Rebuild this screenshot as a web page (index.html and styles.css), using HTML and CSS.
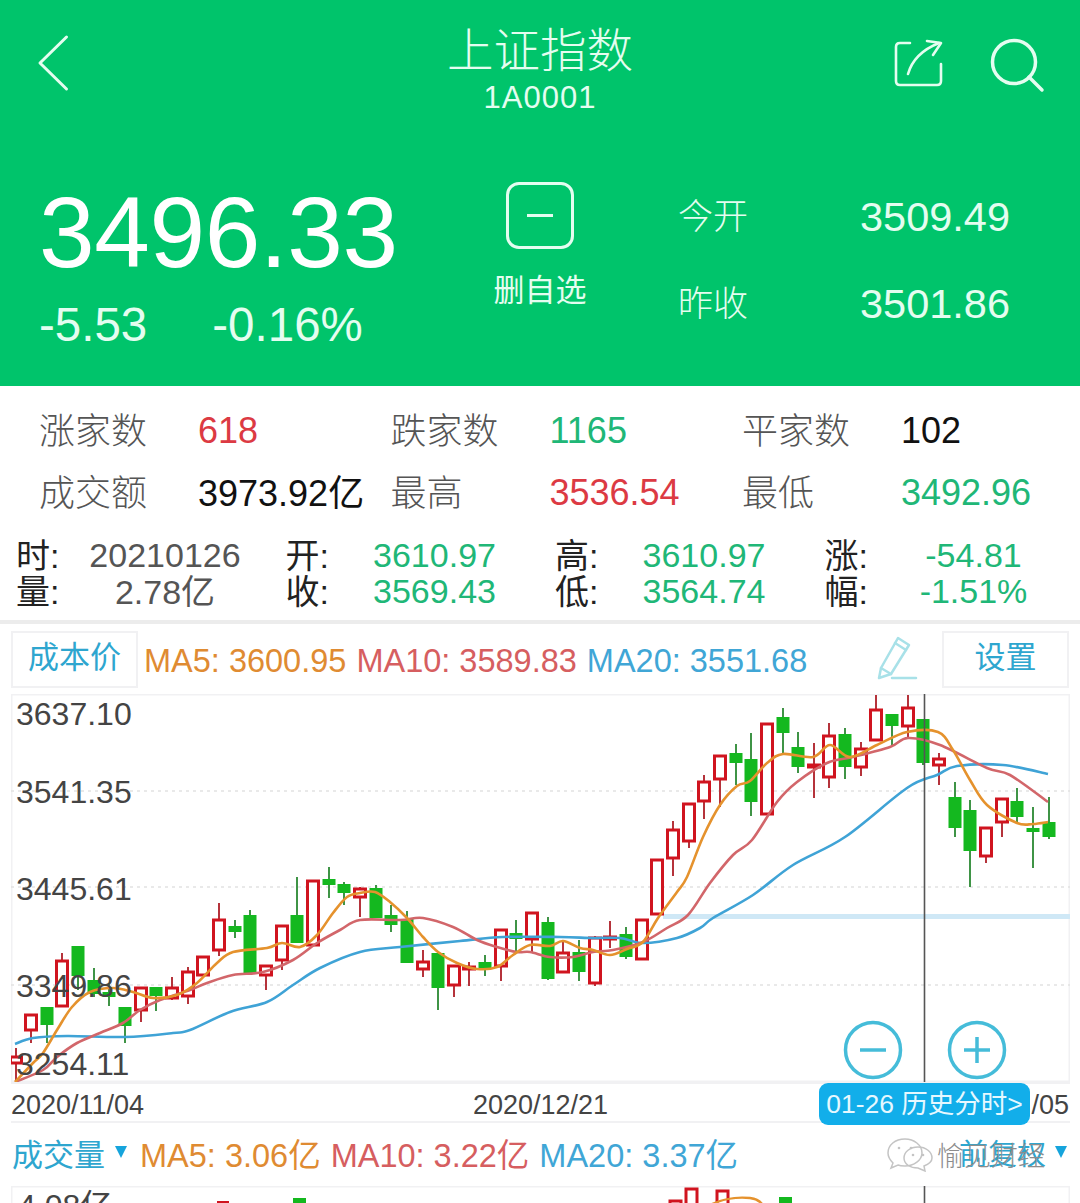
FILE: index.html
```html
<!DOCTYPE html>
<html lang="zh-CN">
<head>
    <meta charset="UTF-8">
    <meta name="viewport" content="width=device-width, initial-scale=1.0">
    <title>上证指数</title>
    <link rel="stylesheet" href="styles.css">
</head>
<body>
    <header class="hero">
        <div class="topbar">
            <svg class="icon-back" width="40" height="64" viewBox="30 32 40 64">
                <path d="M66.5 38 L40 64 L66.5 90"/>
            </svg>
            <div class="title">
                <h1>上证指数</h1>
                <p>1A0001</p>
            </div>
            <div class="topbar-actions">
                <svg class="icon-share" width="50" height="54" viewBox="894 38 50 54">
                    <path d="M910 45 H900 Q896 45 896 49 V83 Q896 87 900 87 H937 Q941 87 941 83 V66"/>
                    <path d="M908 76 Q914 55 939 45"/>
                    <path d="M927 43 L941 45 L933 57"/>
                </svg>
                <svg width="56" height="58" viewBox="990 36 56 58">
                    <circle cx="1014" cy="62" r="21.5"/>
                    <path d="M1029 77 L1042 90"/>
                </svg>
            </div>
        </div>
        <div class="quote">
            <div class="price">
                <div class="price-now">3496.33</div>
                <div class="price-change"><span>-5.53</span><span>-0.16%</span></div>
            </div>
            <div class="watch">
                <div class="watch-box"><i></i></div>
                <span>删自选</span>
            </div>
            <dl class="open-close">
                <dt>今开</dt><dd>3509.49</dd>
                <dt>昨收</dt><dd>3501.86</dd>
            </dl>
        </div>
    </header>

    <section class="market">
        <div class="market-cell"><span class="market-label">涨家数</span><span class="red">618</span></div>
        <div class="market-cell"><span class="market-label">跌家数</span><span class="green">1165</span></div>
        <div class="market-cell"><span class="market-label">平家数</span><span class="black">102</span></div>
        <div class="market-cell"><span class="market-label">成交额</span><span class="black has-unit">3973.92亿</span></div>
        <div class="market-cell"><span class="market-label">最高</span><span class="red">3536.54</span></div>
        <div class="market-cell"><span class="market-label">最低</span><span class="green">3492.96</span></div>
    </section>

    <section class="ohlc">
        <div class="ohlc-cell"><span class="ohlc-label">时:</span><span class="ohlc-value gray">20210126</span></div>
        <div class="ohlc-cell"><span class="ohlc-label">开:</span><span class="ohlc-value green">3610.97</span></div>
        <div class="ohlc-cell"><span class="ohlc-label">高:</span><span class="ohlc-value green">3610.97</span></div>
        <div class="ohlc-cell"><span class="ohlc-label">涨:</span><span class="ohlc-value green">-54.81</span></div>
        <div class="ohlc-cell"><span class="ohlc-label">量:</span><span class="ohlc-value gray has-unit">2.78亿</span></div>
        <div class="ohlc-cell"><span class="ohlc-label">收:</span><span class="ohlc-value green">3569.43</span></div>
        <div class="ohlc-cell"><span class="ohlc-label">低:</span><span class="ohlc-value green">3564.74</span></div>
        <div class="ohlc-cell"><span class="ohlc-label">幅:</span><span class="ohlc-value green">-1.51%</span></div>
    </section>

    <section class="kline">
        <div class="legend">
            <div class="tab-box">成本价</div>
            <div class="ma-list">
                <span class="ma5">MA5: 3600.95</span>
                <span class="ma10">MA10: 3589.83</span>
                <span class="ma20">MA20: 3551.68</span>
            </div>
            <svg class="icon-pen" width="42" height="48" viewBox="878 634 42 48">
                <path d="M881 677 L883 667 L900 637 L911 644 L893 673 Z"/>
                <path d="M897 642 L908 649"/>
                <path d="M883 667 L893 673"/>
                <path d="M894 677 H918"/>
            </svg>
            <div class="tab-box tab-set">设置</div>
        </div>

        <div class="chart-frame">
            <svg id="kchart" class="chart" width="1059" height="388" viewBox="11 694 1059 388"></svg>
            <button class="zoom-btn zoom-out"><svg width="60" height="60" viewBox="0 0 60 60"><circle cx="30" cy="30" r="27.5"/><path d="M17 30 H43"/></svg></button>
            <button class="zoom-btn zoom-in"><svg width="60" height="60" viewBox="0 0 60 60"><circle cx="30" cy="30" r="27.5"/><path d="M17 30 H43 M30 17 V43"/></svg></button>
        </div>

        <div class="dates">
            <span>2020/11/04</span>
            <span>2020/12/21</span>
            <span class="date-end">/05</span>
            <div class="history-tip">01-26 历史分时&gt;</div>
        </div>

        <div class="volume-bar">
            <span class="volume-name">成交量</span><i class="tri"></i>
            <div class="ma-list">
                <span class="ma5">MA5: 3.06亿</span>
                <span class="ma10">MA10: 3.22亿</span>
                <span class="ma20">MA20: 3.37亿</span>
            </div>
            <span class="volume-right">前复权</span><i class="tri"></i>
            <div class="watermark">
                <svg width="46" height="34" viewBox="887 1139 46 34">
                    <path d="M905 1140 C895 1140 888 1146 888 1154 C888 1158 890 1161 893 1164 L891 1169 L898 1166 C900 1167 902 1167 905 1167 C914 1167 922 1161 922 1154 C922 1146 914 1140 905 1140 Z"/>
                    <circle cx="899" cy="1149" r="1.3"/>
                    <circle cx="911" cy="1149" r="1.3"/>
                    <path d="M918 1148 C910 1148 904 1153 904 1159 C904 1165 910 1169 918 1169 L925 1172 L924 1167 C929 1165 932 1162 932 1159 C932 1153 926 1148 918 1148 Z"/>
                    <circle cx="913" cy="1156" r="1.3"/>
                    <circle cx="923" cy="1156" r="1.3"/>
                </svg>
                <span>愉见财经</span>
            </div>
        </div>

        <div class="chart-frame volume-frame">
            <svg id="vchart" class="chart" width="1059" height="40" viewBox="11 1186 1059 40"></svg>
        </div>
    </section>

    <script src="chart.js"></script>
</body>
</html>
```

FILE: styles.css
```css
* {
    box-sizing: border-box;
}

html, body {
    margin: 0;
    padding: 0;
    height: 1203px;
    overflow: hidden;
}

body {
    width: 1080px;
    background: #ffffff;
    font-family: "Liberation Sans", "Noto Sans CJK SC", sans-serif;
    color: #444;
}

/* green header */
.hero {
    height: 386px;
    background-color: #00c46b;
    color: #e4fdf0;
    padding: 0 36px 0 36px;
}

.hero svg {
    display: block;
}

.hero svg path, .hero svg circle {
    fill: none;
    stroke: #e4fdf0;
    stroke-width: 3.5;
    stroke-linecap: round;
    stroke-linejoin: round;
}

.hero .icon-share path {
    stroke-width: 2.6;
}

.hero .icon-back path {
    stroke-width: 3;
}

.topbar {
    height: 182px;
    display: flex;
    justify-content: space-between;
    align-items: flex-start;
    position: relative;
}

.icon-back {
    margin-top: 31px;
    margin-left: -6px;
}

.title {
    position: absolute;
    left: 0;
    right: 0;
    top: 23px;
    text-align: center;
    pointer-events: none;
}

.title h1 {
    margin: 0;
    font-size: 46.5px;
    line-height: 56px;
    font-weight: 300;
}

.title p {
    margin: 0;
    font-size: 31px;
    line-height: 38px;
    letter-spacing: 1px;
}

.topbar-actions {
    display: flex;
    gap: 46px;
    margin-top: 36px;
    margin-right: -2px;
}

.quote {
    display: flex;
    align-items: flex-start;
}

.price {
    width: 449px;
    padding-left: 3px;
}

.price-now {
    color: #ffffff;
    font-size: 100px;
    line-height: 100px;
    letter-spacing: -0.4px;
}

.price-change {
    display: flex;
    gap: 65px;
    margin-top: 16px;
    font-size: 47.5px;
    line-height: 54px;
}

.watch {
    width: 110px;
    display: flex;
    flex-direction: column;
    align-items: center;
}

.watch-box {
    width: 68px;
    height: 67px;
    border: 3.5px solid #e4fdf0;
    border-radius: 13px;
    display: flex;
    align-items: center;
    justify-content: center;
}

.watch-box i {
    width: 26px;
    height: 3.5px;
    background: #e4fdf0;
}

.watch span {
    margin-top: 22px;
    font-size: 31px;
    line-height: 40px;
    white-space: nowrap;
}

.open-close {
    margin: 7px 0 0 83px;
    display: grid;
    grid-template-columns: 182px auto;
    row-gap: 31px;
    font-size: 35px;
    line-height: 56px;
}

.open-close dt {
    font-weight: 300;
}

.open-close dd {
    margin: 0;
    font-size: 41.5px;
}

/* market breadth */
.market {
    display: grid;
    grid-template-columns: repeat(3, 351.5px);
    grid-auto-rows: 62px;
    padding: 14px 0 0 40px;
    font-size: 36px;
}

.market-cell {
    display: flex;
    align-items: center;
    white-space: nowrap;
}

.market-label {
    width: 158px;
    flex: none;
    color: #555;
    font-weight: 300;
    padding-bottom: 6px;
    margin-left: -1px;
    margin-right: 1px;
}

/* the CJK unit makes the line box taller, pull it back up */
.market-cell .has-unit {
    padding-bottom: 7px;
}

.ohlc-value.has-unit {
    padding-bottom: 4px;
}

.red { color: #dc3a43; }
.green { color: #20b777; }
.black { color: #111; }
.gray { color: #555; }

/* ohlc of selected day */
.ohlc {
    display: grid;
    grid-template-columns: repeat(4, 269.5px);
    grid-auto-rows: 36px;
    margin-top: 13px;
    padding-left: 16px;
    height: 87px;
    border-bottom: 4px solid #ececec;
    font-size: 34px;
}

.ohlc-cell {
    display: flex;
    align-items: center;
}

.ohlc-label {
    width: 60px;
    color: #222;
    padding-bottom: 3px;
}

.ohlc-value {
    width: 178px;
    text-align: center;
    white-space: nowrap;
}

/* k line */
.kline {
    padding: 5px 10px 0 11px;
}

.legend {
    height: 60px;
    display: flex;
    align-items: center;
}

.tab-box {
    width: 127px;
    height: 57px;
    border: 2px solid #f1f1f3;
    color: #2ea6cf;
    font-size: 31px;
    text-align: center;
    line-height: 50px;
    flex: none;
}

.ma-list {
    display: flex;
    gap: 10px;
    white-space: nowrap;
    font-size: 32.5px;
}

.legend .ma-list {
    margin-left: 6px;
    margin-top: 5px;
    width: 664px;
    flex: none;
}

.ma5 { color: #df8b32; }
.ma10 { color: #d65e60; }
.ma20 { color: #40a6d6; }

.icon-pen {
    flex: none;
    margin-left: 68px;
}

.icon-pen path {
    fill: none;
    stroke: #a8e1e8;
    stroke-width: 2.5;
    stroke-linejoin: round;
    stroke-linecap: round;
}

.tab-set {
    margin-left: 24px;
}

.chart-frame {
    position: relative;
    height: 388px;
    margin-top: 5px;
    box-shadow: inset 0 0 0 1.5px #f1f1f3;
}

.chart {
    display: block;
    overflow: hidden;
}

.chart text {
    font-family: "Liberation Sans", "Noto Sans CJK SC", sans-serif;
    font-size: 32px;
    fill: #444;
}

.zoom-btn {
    position: absolute;
    top: 326px;
    width: 60px;
    height: 60px;
    padding: 0;
    border: none;
    background: none;
}

.zoom-btn svg {
    display: block;
}

.zoom-btn circle, .zoom-btn path {
    fill: none;
    stroke: #45bcd9;
    stroke-width: 3.5;
}

.zoom-out { left: 832px; }
.zoom-in { left: 936px; }

.dates {
    position: relative;
    height: 41px;
    display: grid;
    grid-template-columns: 1fr auto 1fr;
    align-items: center;
    padding-top: 5px;
    font-size: 27px;
    color: #444;
    border-top: 2px solid #f1f1f3;
    border-bottom: 2px solid #f1f1f3;
}

.date-end {
    justify-self: end;
    padding-right: 1px;
}

.history-tip {
    position: absolute;
    left: 808px;
    top: -1px;
    width: 211px;
    height: 42px;
    background: #12aeea;
    border-radius: 9px;
    color: #e6f8ff;
    font-size: 26.5px;
    line-height: 42px;
    text-align: center;
    white-space: nowrap;
}

.volume-bar {
    position: relative;
    height: 58px;
    display: flex;
    align-items: center;
}

.volume-name {
    color: #2ea6cf;
    font-size: 31px;
    margin-left: 1px;
}

.tri {
    width: 0;
    height: 0;
    margin: -1px 0 0 10px;
    border-left: 6px solid transparent;
    border-right: 6px solid transparent;
    border-top: 12px solid #16a4dc;
}

.volume-bar .ma-list {
    margin-left: 13px;
    gap: 10px;
    width: 808px;
    flex: none;
}

.volume-right {
    color: #2ea6cf;
    font-size: 29px;
    position: absolute;
    left: 948px;
}

.volume-bar > .tri:last-of-type {
    position: absolute;
    left: 1034px;
}

/* sits over the toolbar, as in the shared picture */
.watermark {
    position: absolute;
    left: 876px;
    top: 12px;
    display: flex;
    align-items: center;
    gap: 4px;
    color: #8d8d8d;
    font-size: 27px;
    font-weight: 300;
    white-space: nowrap;
}

.watermark path {
    fill: none;
    stroke: #c4c4c4;
    stroke-width: 1.5;
}

.watermark circle {
    fill: #c4c4c4;
}

.volume-frame {
    margin-top: 5px;
    height: 40px;
}
```

FILE: chart.js
```js
// [x, wickTop, wickBottom, bodyTop, bodyBottom]
const upDays = [
    [16,1048,1083,1057,1063],[31,1014,1043,1015,1030],[62,953,1007,961,1006],[141,987,1022,988,1010],
    [172,977,1000,988,998],[188,967,1004,972,996],[203,956,975,957,975],[219,903,956,920,950],
    [266,965,990,966,975],[282,925,970,926,960],[313,880,946,881,945],[360,887,917,889,897],
    [423,950,977,962,969],[454,965,997,966,985],[469,962,986,967,969],[501,929,981,930,966],
    [532,912,952,913,939],[563,941,973,953,972],[595,936,986,938,983],[610,921,948,937,939],
    [642,919,960,920,959],[657,859,915,860,914],[673,821,876,830,858],[689,803,848,804,841],
    [704,775,819,782,801],[720,755,807,756,779],[767,723,815,724,814],[814,743,798,765,767],
    [829,723,788,736,777],[861,742,776,749,767],[876,695,741,710,740],[908,695,738,708,726],
    [939,753,785,759,765],[986,827,863,828,856],[1002,798,837,799,822]
];
const downDays = [
    [47,1007,1043,1007,1025],[78,946,990,946,976],[94,968,997,980,994],[109,983,1006,992,997],
    [125,1007,1043,1007,1026],[156,987,1011,987,996],[235,920,938,926,932],[250,910,973,915,973],
    [297,877,943,915,943],[329,867,898,879,885],[344,882,905,884,893],[376,885,918,888,918],
    [391,905,932,915,925],[407,911,963,919,963],[438,953,1010,953,988],[485,955,976,962,968],
    [516,920,951,933,939],[548,917,980,922,979],[579,940,981,952,972],[626,927,959,934,957],
    [736,744,785,753,763],[751,733,816,759,802],[783,708,755,717,733],[798,732,773,747,767],
    [845,728,779,734,767],[892,714,747,714,726],[923,719,765,719,763],[955,782,837,797,828],
    [970,800,887,810,851],[1017,788,822,801,817],[1033,807,868,828,832],[1049,797,839,822,837]
];

const ma5 = "15,1082 33,1063 43,1053 57,1030 72,1007 90,992 113,988 133,992 153,998 177,995 197,983 217,963 233,952 267,948 282,943 300,947 317,935 333,913 347,897 360,893 375,892 390,902 407,918 423,937 438,952 457,963 477,969 497,967 513,955 530,945 550,946 563,941 580,948 593,950 610,955 627,949 643,942 658,918 677,892 687,877 703,837 720,805 737,786 750,781 767,763 783,754 813,757 830,745 850,757 877,745 907,732 938,732 953,750 970,780 987,805 1017,823 1033,824 1048,822";
const ma10 = "15,1082 43,1070 57,1057 77,1043 100,1033 123,1023 140,1010 160,1000 190,990 207,983 233,975 263,972 293,960 317,943 340,930 360,920 400,920 423,918 453,927 477,940 497,947 517,952 530,952 550,957 573,957 593,952 613,950 643,942 667,928 688,915 710,883 733,855 752,840 777,802 797,782 827,763 853,757 890,747 908,738 940,745 987,768 1010,775 1048,802";
const ma20 = "15,1044 33,1038 67,1036 125,1037 173,1033 190,1030 230,1012 267,1002 293,985 320,968 360,952 400,947 460,941 503,937 560,937 593,938 620,938 643,943 677,938 700,928 713,918 753,895 793,865 845,837 907,788 937,775 957,766 1003,765 1048,774";

const axis = [["3637.10",725],["3541.35",803],["3445.61",900],["3349.86",997],["3254.11",1075]];

function el(name, attrs, text) {
    const node = document.createElementNS("http://www.w3.org/2000/svg", name);
    for (const key in attrs) node.setAttribute(key, attrs[key]);
    if (text) node.textContent = text;
    return node;
}

// turn "x,y x,y" into a smooth path
function smooth(points) {
    const p = points.split(" ").map(function (s) { return s.split(",").map(Number); });
    let d = "M" + p[0][0] + " " + p[0][1];
    for (let i = 0; i < p.length - 1; i++) {
        const a = p[i - 1] || p[i], b = p[i], c = p[i + 1], e = p[i + 2] || c;
        const x1 = b[0] + (c[0] - a[0]) / 6, y1 = b[1] + (c[1] - a[1]) / 6;
        const x2 = c[0] - (e[0] - b[0]) / 6, y2 = c[1] - (e[1] - b[1]) / 6;
        d += " C" + x1 + " " + y1 + " " + x2 + " " + y2 + " " + c[0] + " " + c[1];
    }
    return d;
}

function drawCandle(svg, c, up) {
    const [x, wickTop, wickBottom, top, bottom] = c;
    svg.appendChild(el("line", {x1: x, x2: x, y1: wickTop, y2: wickBottom, stroke: up ? "#b5333b" : "#3f9446", "stroke-width": 2}));
    if (up) {
        svg.appendChild(el("rect", {x: x - 5.5, y: top, width: 11, height: Math.max(bottom - top, 1), fill: "#fff", stroke: "#d0141f", "stroke-width": 3}));
    } else {
        svg.appendChild(el("rect", {x: x - 6.5, y: top, width: 13, height: Math.max(bottom - top, 2), fill: "#14b81f"}));
    }
}

const k = document.getElementById("kchart");

[791, 887, 985].forEach(function (y) {
    k.appendChild(el("line", {x1: 11, x2: 1070, y1: y, y2: y, stroke: "#e2e2e2", "stroke-width": 1.5, "stroke-dasharray": "3 4"}));
});
k.appendChild(el("rect", {x: 663, y: 914, width: 407, height: 5, fill: "#cfe8f6"}));

upDays.forEach(function (c) { drawCandle(k, c, true); });
downDays.forEach(function (c) { drawCandle(k, c, false); });

[[ma20, "#3fa3d6"], [ma10, "#d2666a"], [ma5, "#e5922d"]].forEach(function (m) {
    k.appendChild(el("path", {d: smooth(m[0]), fill: "none", stroke: m[1], "stroke-width": 2.6}));
});

k.appendChild(el("line", {x1: 924.5, x2: 924.5, y1: 694, y2: 1082, stroke: "#555", "stroke-width": 1.6}));

axis.forEach(function (a) {
    k.appendChild(el("text", {x: 16, y: a[1]}, a[0]));
});

// bottom chart, only its top edge is on screen
const v = document.getElementById("vchart");
[[670,1201],[686,1189],[717,1191]].forEach(function (b) {
    v.appendChild(el("rect", {x: b[0], y: b[1], width: 11, height: 30, fill: "#fff", stroke: "#d0141f", "stroke-width": 3}));
});
[[293,1198],[779,1197]].forEach(function (b) {
    v.appendChild(el("rect", {x: b[0], y: b[1], width: 13, height: 30, fill: "#14b81f"}));
});
v.appendChild(el("rect", {x: 217, y: 1201, width: 12, height: 30, fill: "#d0141f"}));
v.appendChild(el("path", {d: "M712 1204 Q730 1196 750 1198 Q758 1199 762 1204", fill: "none", stroke: "#e5922d", "stroke-width": 2.4}));
v.appendChild(el("line", {x1: 924.5, x2: 924.5, y1: 1186, y2: 1226, stroke: "#555", "stroke-width": 1.6}));
v.appendChild(el("text", {x: 18, y: 1217}, "4.08亿"));
```
